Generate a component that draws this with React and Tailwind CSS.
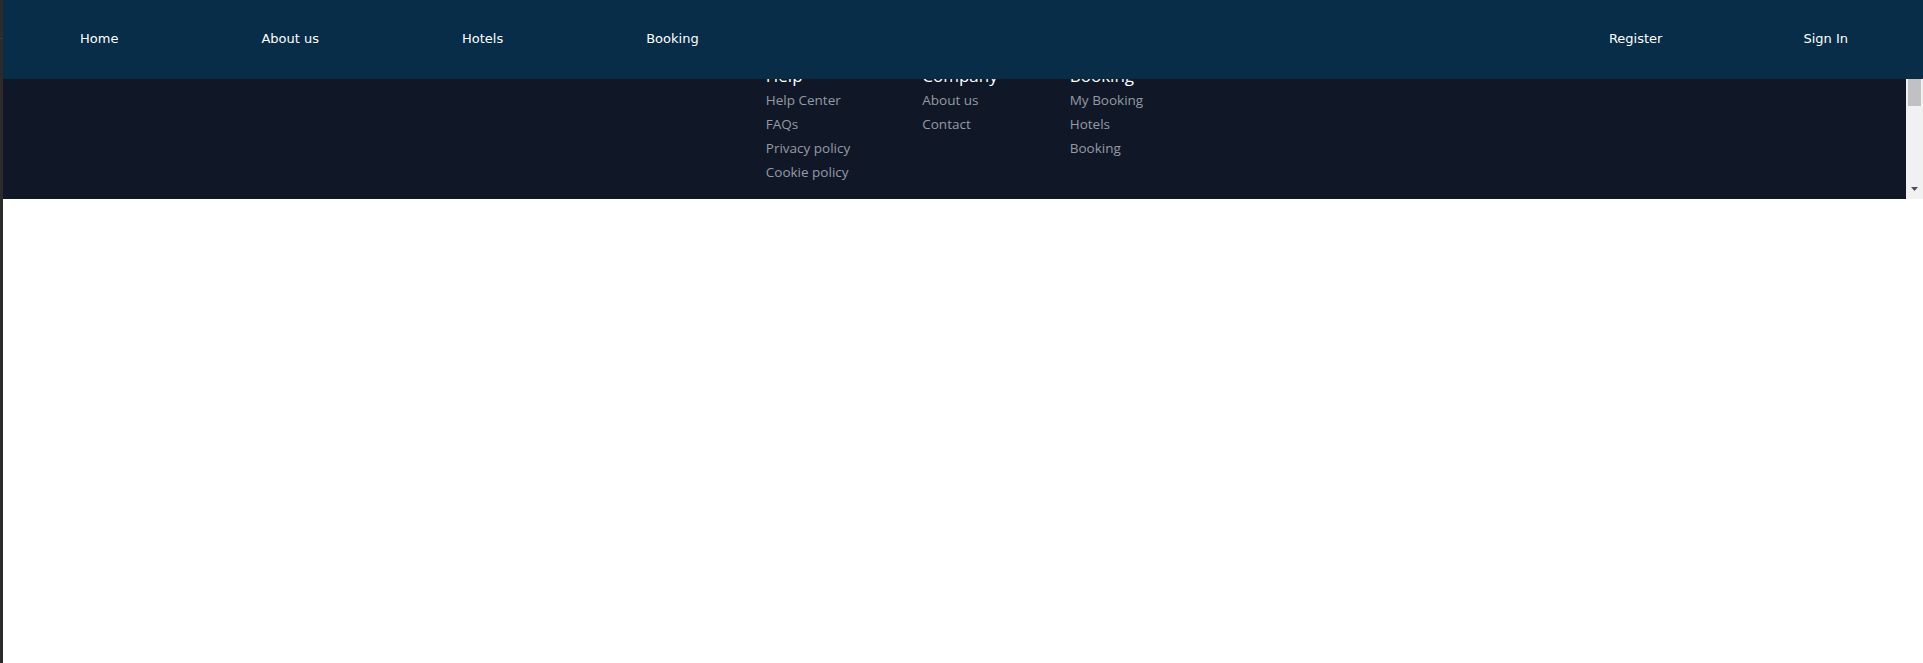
import React from 'react';

const navLeft = ['Home', 'About us', 'Hotels', 'Booking'];
const navRight = ['Register', 'Sign In'];

const footerCols = [
  { title: 'Help', links: ['Help Center', 'FAQs', 'Privacy policy', 'Cookie policy'] },
  { title: 'Company', links: ['About us', 'Contact'] },
  { title: 'Booking', links: ['My Booking', 'Hotels', 'Booking'] },
];

const Navbar = () => {
  return (
    <nav className="h-[79px] bg-[#072d48] flex items-center justify-between font-['DejaVu_Sans',sans-serif] text-[13px] text-white">
      <ul className="flex gap-[143px] pl-[77px] -mt-[1px]">
        {navLeft.map((item) => (
          <li key={item} className="cursor-pointer">{item}</li>
        ))}
      </ul>
      <ul className="flex gap-[141px] pr-[75px] -mt-[1px]">
        {navRight.map((item) => (
          <li key={item} className="cursor-pointer">{item}</li>
        ))}
      </ul>
    </nav>
  );
};

const Scrollbar = () => {
  return (
    <div className="w-[17px] shrink-0 bg-[#f1f1f1] flex flex-col items-center">
      <div className="w-[13px] h-[27px] bg-[#c1c1c1]" />
      <div className="flex-1" />
      <svg width="7" height="4" viewBox="0 0 7 4" className="mb-[8px]">
        <polygon points="0,0 7,0 3.5,4" fill="#505050" />
      </svg>
    </div>
  );
};

const Footer = () => {
  return (
    <div className="flex h-[120px]">
      <footer className="flex-1 bg-gray-900 overflow-hidden font-['Open_Sans',sans-serif]">
        <div className="-mt-[15px] flex justify-center gap-[72px]">
          {footerCols.map((col) => (
            <div key={col.title} className="flex flex-col">
              <h3 className="text-[17px] leading-[24px] text-white">{col.title}</h3>
              <ul className="text-[13.5px] leading-[24px] text-[#969aa3]">
                {col.links.map((link) => (
                  <li key={link} className="whitespace-nowrap">{link}</li>
                ))}
              </ul>
            </div>
          ))}
        </div>
      </footer>
      <Scrollbar />
    </div>
  );
};

export default function App() {
  return (
    <div className="flex min-h-[663px] bg-white">
      <div className="w-[3px] shrink-0 flex flex-col bg-[#2b2b2b]">
        <div className="h-[38px]" />
        <div className="h-[1px] bg-[#3a3a3a]" />
      </div>
      <div className="flex-1 flex flex-col">
        <Navbar />
        <Footer />
      </div>
    </div>
  );
}
